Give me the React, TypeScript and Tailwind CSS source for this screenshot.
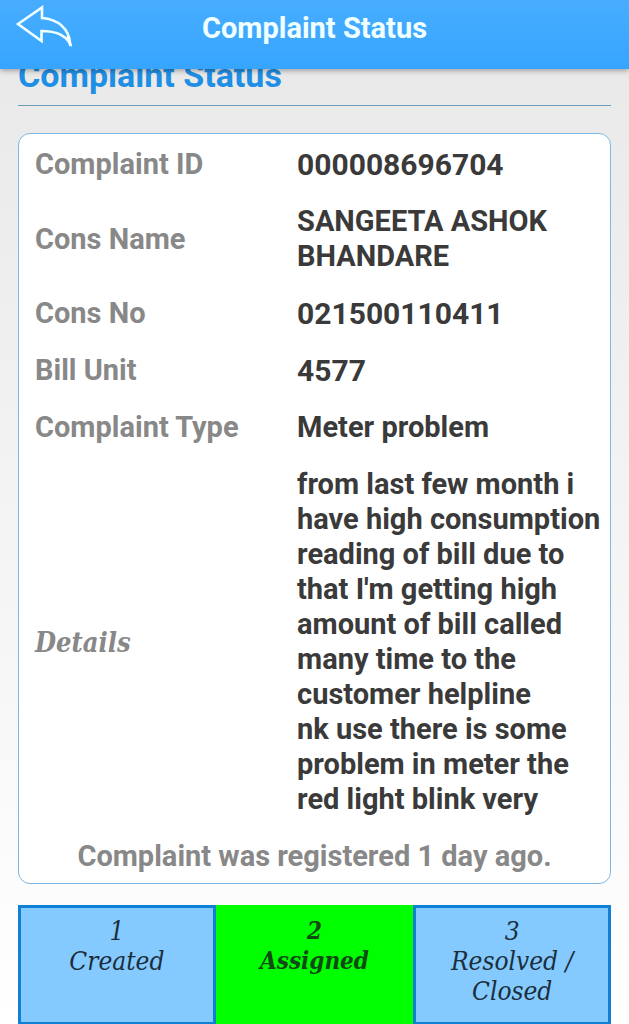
import React from 'react';

const ROWS = [
  { label: 'Complaint ID', numeric: true, lines: ['000008696704'] },
  { label: 'Cons Name', lines: ['SANGEETA ASHOK', 'BHANDARE'] },
  { label: 'Cons No', numeric: true, lines: ['021500110411'] },
  { label: 'Bill Unit', numeric: true, lines: ['4577'] },
  { label: 'Complaint Type', lines: ['Meter problem'] },
  {
    label: 'Details',
    serif: true,
    lines: [
      'from last few month i',
      'have high consumption',
      'reading of bill due to',
      "that I'm getting high",
      'amount of bill called',
      'many time to the',
      'customer helpline',
      'nk use there is some',
      'problem in meter the',
      'red light blink very',
    ],
  },
];

const STEPS = [
  { id: 1, lines: ['Created'], active: false },
  { id: 2, lines: ['Assigned'], active: true },
  { id: 3, lines: ['Resolved /', 'Closed'], active: false },
];

const BackIcon = () => (
  <svg width="58" height="46" viewBox="0 0 58 46" fill="none" stroke="#f0ffff" strokeWidth="2.6" strokeLinejoin="miter">
    <path d="M3 21 L27 4.500 V15 C43 16 54 26 55 40 C50 33 43 28 26.500 28 V38 Z" />
    <path d="M53 33 L55.500 43" strokeWidth="3" />
  </svg>
);

export default function App() {
  return (
    <div className="min-h-screen bg-linear-to-b from-[#e8e8e8] to-white font-['Roboto',sans-serif] font-bold">
      <header className="relative z-10 grid h-[69px] grid-cols-[80px_1fr_80px] bg-linear-to-b from-[#47adff] to-[#36a5ff] shadow-[0_1px_6px_rgba(0,0,0,0.4)]">
        <button type="button" aria-label="Back" className="flex items-start pt-[3px] pl-[15px]">
          <BackIcon />
        </button>
        <h1 className="pt-3 text-center text-[29px] leading-8 text-[#f0ffff]">Complaint Status</h1>
      </header>

      <main className="px-[18px]">
        <h2 className="-mt-3 border-b border-[#6a9cb8] pb-3 text-[34px] leading-9 text-[#1f8fe5]">Complaint Status</h2>

        <section className="mt-[27px] rounded-xl border border-[#7db8e0] bg-white pt-[2px] text-[29px] leading-[35px]">
          <table className="w-full table-fixed">
            <tbody>
              {ROWS.map((row) => (
                <tr key={row.label}>
                  <th
                    scope="row"
                    className={`w-[44%] py-[11px] pl-4 text-left align-middle text-[#888888] ${
                      row.serif ? "font-['DejaVu_Serif_Condensed','DejaVu_Serif',serif] text-[27px] italic" : ''
                    }`}
                  >
                    {row.label}
                  </th>
                  <td className={`py-[11px] pl-[18px] whitespace-nowrap text-[#3a3a3a] ${row.numeric ? 'text-[30px]' : ''}`}>
                    {row.lines.map((line) => (
                      <div key={line}>{line}</div>
                    ))}
                  </td>
                </tr>
              ))}
            </tbody>
          </table>
          <p className="pt-[11px] pb-[9px] text-center text-[#888888]">Complaint was registered 1 day ago.</p>
        </section>

        <ol className="mt-[21px] grid h-[120px] grid-cols-3 text-center font-['DejaVu_Serif_Condensed','DejaVu_Serif',serif] leading-[30px] italic">
          {STEPS.map((step) => (
            <li
              key={step.id}
              className={
                step.active
                  ? 'border-[3px] border-[#00ff00] bg-[#00ff00] pt-2 text-[24px] text-[#0f4a12]'
                  : 'border-[3px] border-[#0f80d4] bg-[#84caff] pt-2 text-[26px] font-normal text-[#1c2e3c]'
              }
            >
              <div>{step.id}</div>
              {step.lines.map((line) => (
                <div key={line}>{line}</div>
              ))}
            </li>
          ))}
        </ol>
      </main>
    </div>
  );
}
